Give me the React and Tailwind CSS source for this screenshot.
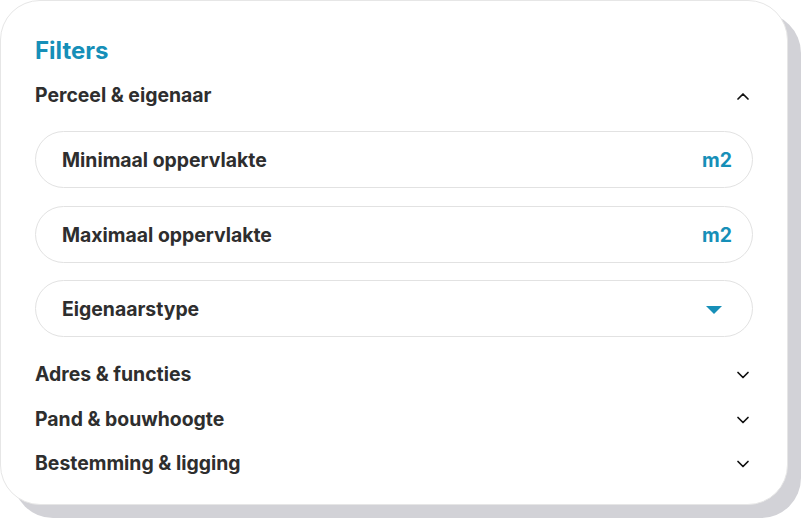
import { useState } from 'react'

const sections = [
  { id: 'perceel', label: 'Perceel & eigenaar' },
  { id: 'adres', label: 'Adres & functies' },
  { id: 'pand', label: 'Pand & bouwhoogte' },
  { id: 'bestemming', label: 'Bestemming & ligging' },
]

function Chevron({ up }) {
  return (
    <svg width="14" height="8" viewBox="0 0 14 8" fill="none" className="shrink-0">
      <polyline
        points={up ? '2,7 7,2 12,7' : '2,1.5 7,6.5 12,1.5'}
        stroke="#111"
        strokeWidth="1.7"
        strokeLinecap="round"
        strokeLinejoin="round"
      />
    </svg>
  )
}

function SectionHeader({ label, open, onToggle }) {
  return (
    <button
      onClick={onToggle}
      className="flex h-7 w-full items-center justify-between pr-[3px] pt-[2px] text-left text-[19.4px] font-bold text-[#2e2e2e]"
    >
      {label}
      <Chevron up={open} />
    </button>
  )
}

function Field({ label, unit, select }) {
  return (
    <div className="flex h-[57px] items-center justify-between rounded-full border border-[#e2e2e2] bg-white pl-[26px] pr-[20px] pt-[3px]">
      <span className="text-[19.4px] font-bold text-[#2e2e2e]">{label}</span>
      {unit && <span className="text-[19.4px] font-bold text-[#168fb8]">{unit}</span>}
      {select && (
        <svg width="16" height="9" viewBox="0 0 16 9" className="mr-[10px]">
          <polygon points="0,0 16,0 8,8" fill="#168fb8" />
        </svg>
      )}
    </div>
  )
}

export default function App() {
  const [open, setOpen] = useState('perceel')

  const toggle = (id) => setOpen(open === id ? null : id)

  return (
    <div className="h-[518px] w-[801px] bg-white font-['Inter',sans-serif]">
      <div className="w-[788px] rounded-[40px] border border-[#e6e6e6] bg-white px-[34px] pb-[27px] pt-[35px] shadow-[13px_13px_0_#d2d2d7]">
        <h2 className="h-7 pt-[1px] text-[24px] font-bold leading-7 text-[#168fb8]">Filters</h2>

        <div className="mt-[17px]">
          <SectionHeader label={sections[0].label} open={open === 'perceel'} onToggle={() => toggle('perceel')} />
          {open === 'perceel' && (
            <div className="mt-[22px] flex flex-col gap-[17.5px]">
              <Field label="Minimaal oppervlakte" unit="m2" />
              <Field label="Maximaal oppervlakte" unit="m2" />
              <Field label="Eigenaarstype" select />
            </div>
          )}
        </div>

        <div className="mt-[23px] flex flex-col gap-[16.5px]">
          {sections.slice(1).map((s) => (
            <SectionHeader key={s.id} label={s.label} open={open === s.id} onToggle={() => toggle(s.id)} />
          ))}
        </div>
      </div>
    </div>
  )
}
